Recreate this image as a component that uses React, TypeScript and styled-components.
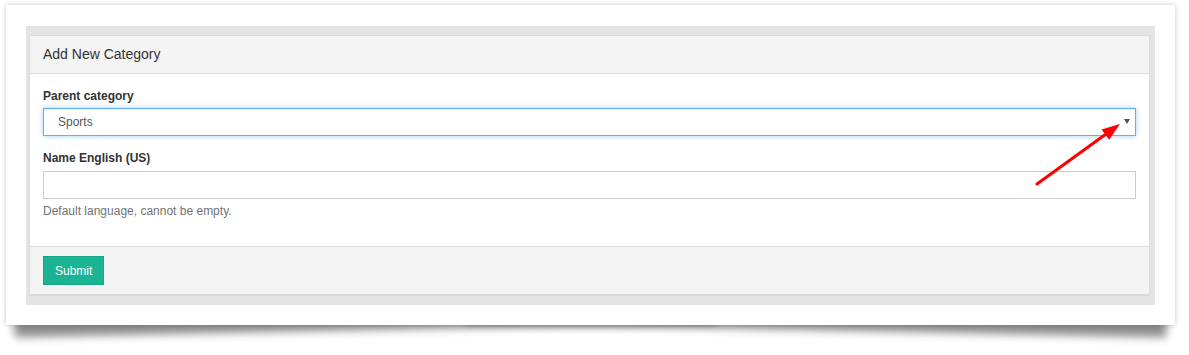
import React from "react";
import styled, { createGlobalStyle } from "styled-components";

const GlobalStyle = createGlobalStyle`
  html {
    background: #ffffff;
  }
  html, body {
    margin: 0;
    padding: 0;
  }
  body {
    font-family: "Liberation Sans", Arial, sans-serif;
    font-size: 12px;
    color: #333333;
  }
  * { box-sizing: border-box; }
`;

const Page = styled.div`
  position: relative;
  z-index: 0;
  padding: 5px 14px 30px 6px;
  width: 1189px;
`;

const Card = styled.div`
  position: relative;
  width: 1169px;
  padding: 21px 20px 20px 20px;
  background: #ffffff;
  box-shadow: 0 0 5px rgba(0, 0, 0, 0.22);

  &::before,
  &::after {
    content: "";
    position: absolute;
    z-index: -1;
    bottom: 14px;
    width: 60%;
    height: 30px;
    background: #999;
    box-shadow: 0 19px 8px rgba(0, 0, 0, 0.45);
  }
  &::before {
    left: 8px;
    transform: rotate(-1.2deg);
  }
  &::after {
    right: 8px;
    transform: rotate(1.2deg);
  }
`;

const Frame = styled.div`
  background: #e4e4e4;
  padding: 9px 5px 10px 3px;
`;

const Panel = styled.div`
  background: #ffffff;
  border: 1px solid #dcdcdc;
  box-shadow: 0 1px 1px rgba(0, 0, 0, 0.05);
`;

const PanelHeading = styled.div`
  background: #f4f4f4;
  border-bottom: 1px solid #dddddd;
  padding: 10px 13px;
  height: 38px;
  font-size: 14px;
  line-height: 17px;
  color: #333333;
`;

const PanelBody = styled.div`
  padding: 14px 13px 26px 13px;
`;

const FormGroup = styled.div<{ $gap?: number }>`
  margin-bottom: ${(p) => p.$gap ?? 0}px;
`;

const Label = styled.div<{ $gap: number }>`
  font-weight: bold;
  font-size: 12px;
  line-height: 17px;
  color: #333333;
  margin-bottom: ${(p) => p.$gap}px;
`;

const SelectBox = styled.div`
  display: flex;
  align-items: center;
  height: 28px;
  padding: 0 14px;
  border: 1px solid #66afe9;
  background: #ffffff;
  box-shadow: inset 0 1px 1px rgba(0, 0, 0, 0.075), 0 0 5px rgba(102, 175, 233, 0.6);
  color: #555555;
  font-size: 12px;
`;

const SelectValue = styled.span`
  flex: 1;
`;

const Caret = styled.span`
  width: 0;
  height: 0;
  border-left: 3.5px solid transparent;
  border-right: 3.5px solid transparent;
  border-top: 5px solid #555555;
  margin-right: -9px;
  margin-top: -1px;
`;

const TextInput = styled.input`
  display: block;
  width: 100%;
  height: 28px;
  border: 1px solid #cccccc;
  background: #ffffff;
  padding: 0 12px;
  font-family: inherit;
  font-size: 12px;
  outline: none;
`;

const HelpBlock = styled.div`
  margin-top: 4px;
  font-size: 12px;
  line-height: 17px;
  color: #737373;
`;

const PanelFooter = styled.div`
  background: #f4f4f4;
  border-top: 1px solid #dddddd;
  padding: 9px 13px 9px 13px;
`;

const Button = styled.button`
  display: block;
  height: 29px;
  padding: 0 11px;
  background: #1ab394;
  border: 1px solid #18a689;
  color: #ffffff;
  font-family: "Liberation Sans", Arial, sans-serif;
  font-size: 12px;
  cursor: pointer;
`;

const Arrow = styled.svg`
  position: absolute;
  left: 1028px;
  top: 115px;
  width: 92px;
  height: 72px;
  overflow: visible;
  pointer-events: none;
`;

export default function App() {
  return (
    <>
      <GlobalStyle />
      <Page>
        <Card>
          <Frame>
            <Panel>
              <PanelHeading>Add New Category</PanelHeading>
              <PanelBody>
                <FormGroup $gap={14}>
                  <Label $gap={3}>Parent category</Label>
                  <SelectBox>
                    <SelectValue>Sports</SelectValue>
                    <Caret />
                  </SelectBox>
                </FormGroup>
                <FormGroup>
                  <Label $gap={4}>Name English (US)</Label>
                  <TextInput type="text" />
                  <HelpBlock>Default language, cannot be empty.</HelpBlock>
                </FormGroup>
              </PanelBody>
              <PanelFooter>
                <Button type="button">Submit</Button>
              </PanelFooter>
            </Panel>
          </Frame>
          <Arrow viewBox="0 0 92 72">
            <line x1="3" y1="64" x2="71" y2="14.8" stroke="#ff0000" strokeWidth="3" strokeLinecap="round" />
            <polygon points="86,4 67.6,9.4 75.2,19.8" fill="#ff0000" />
          </Arrow>
        </Card>
      </Page>
    </>
  );
}
